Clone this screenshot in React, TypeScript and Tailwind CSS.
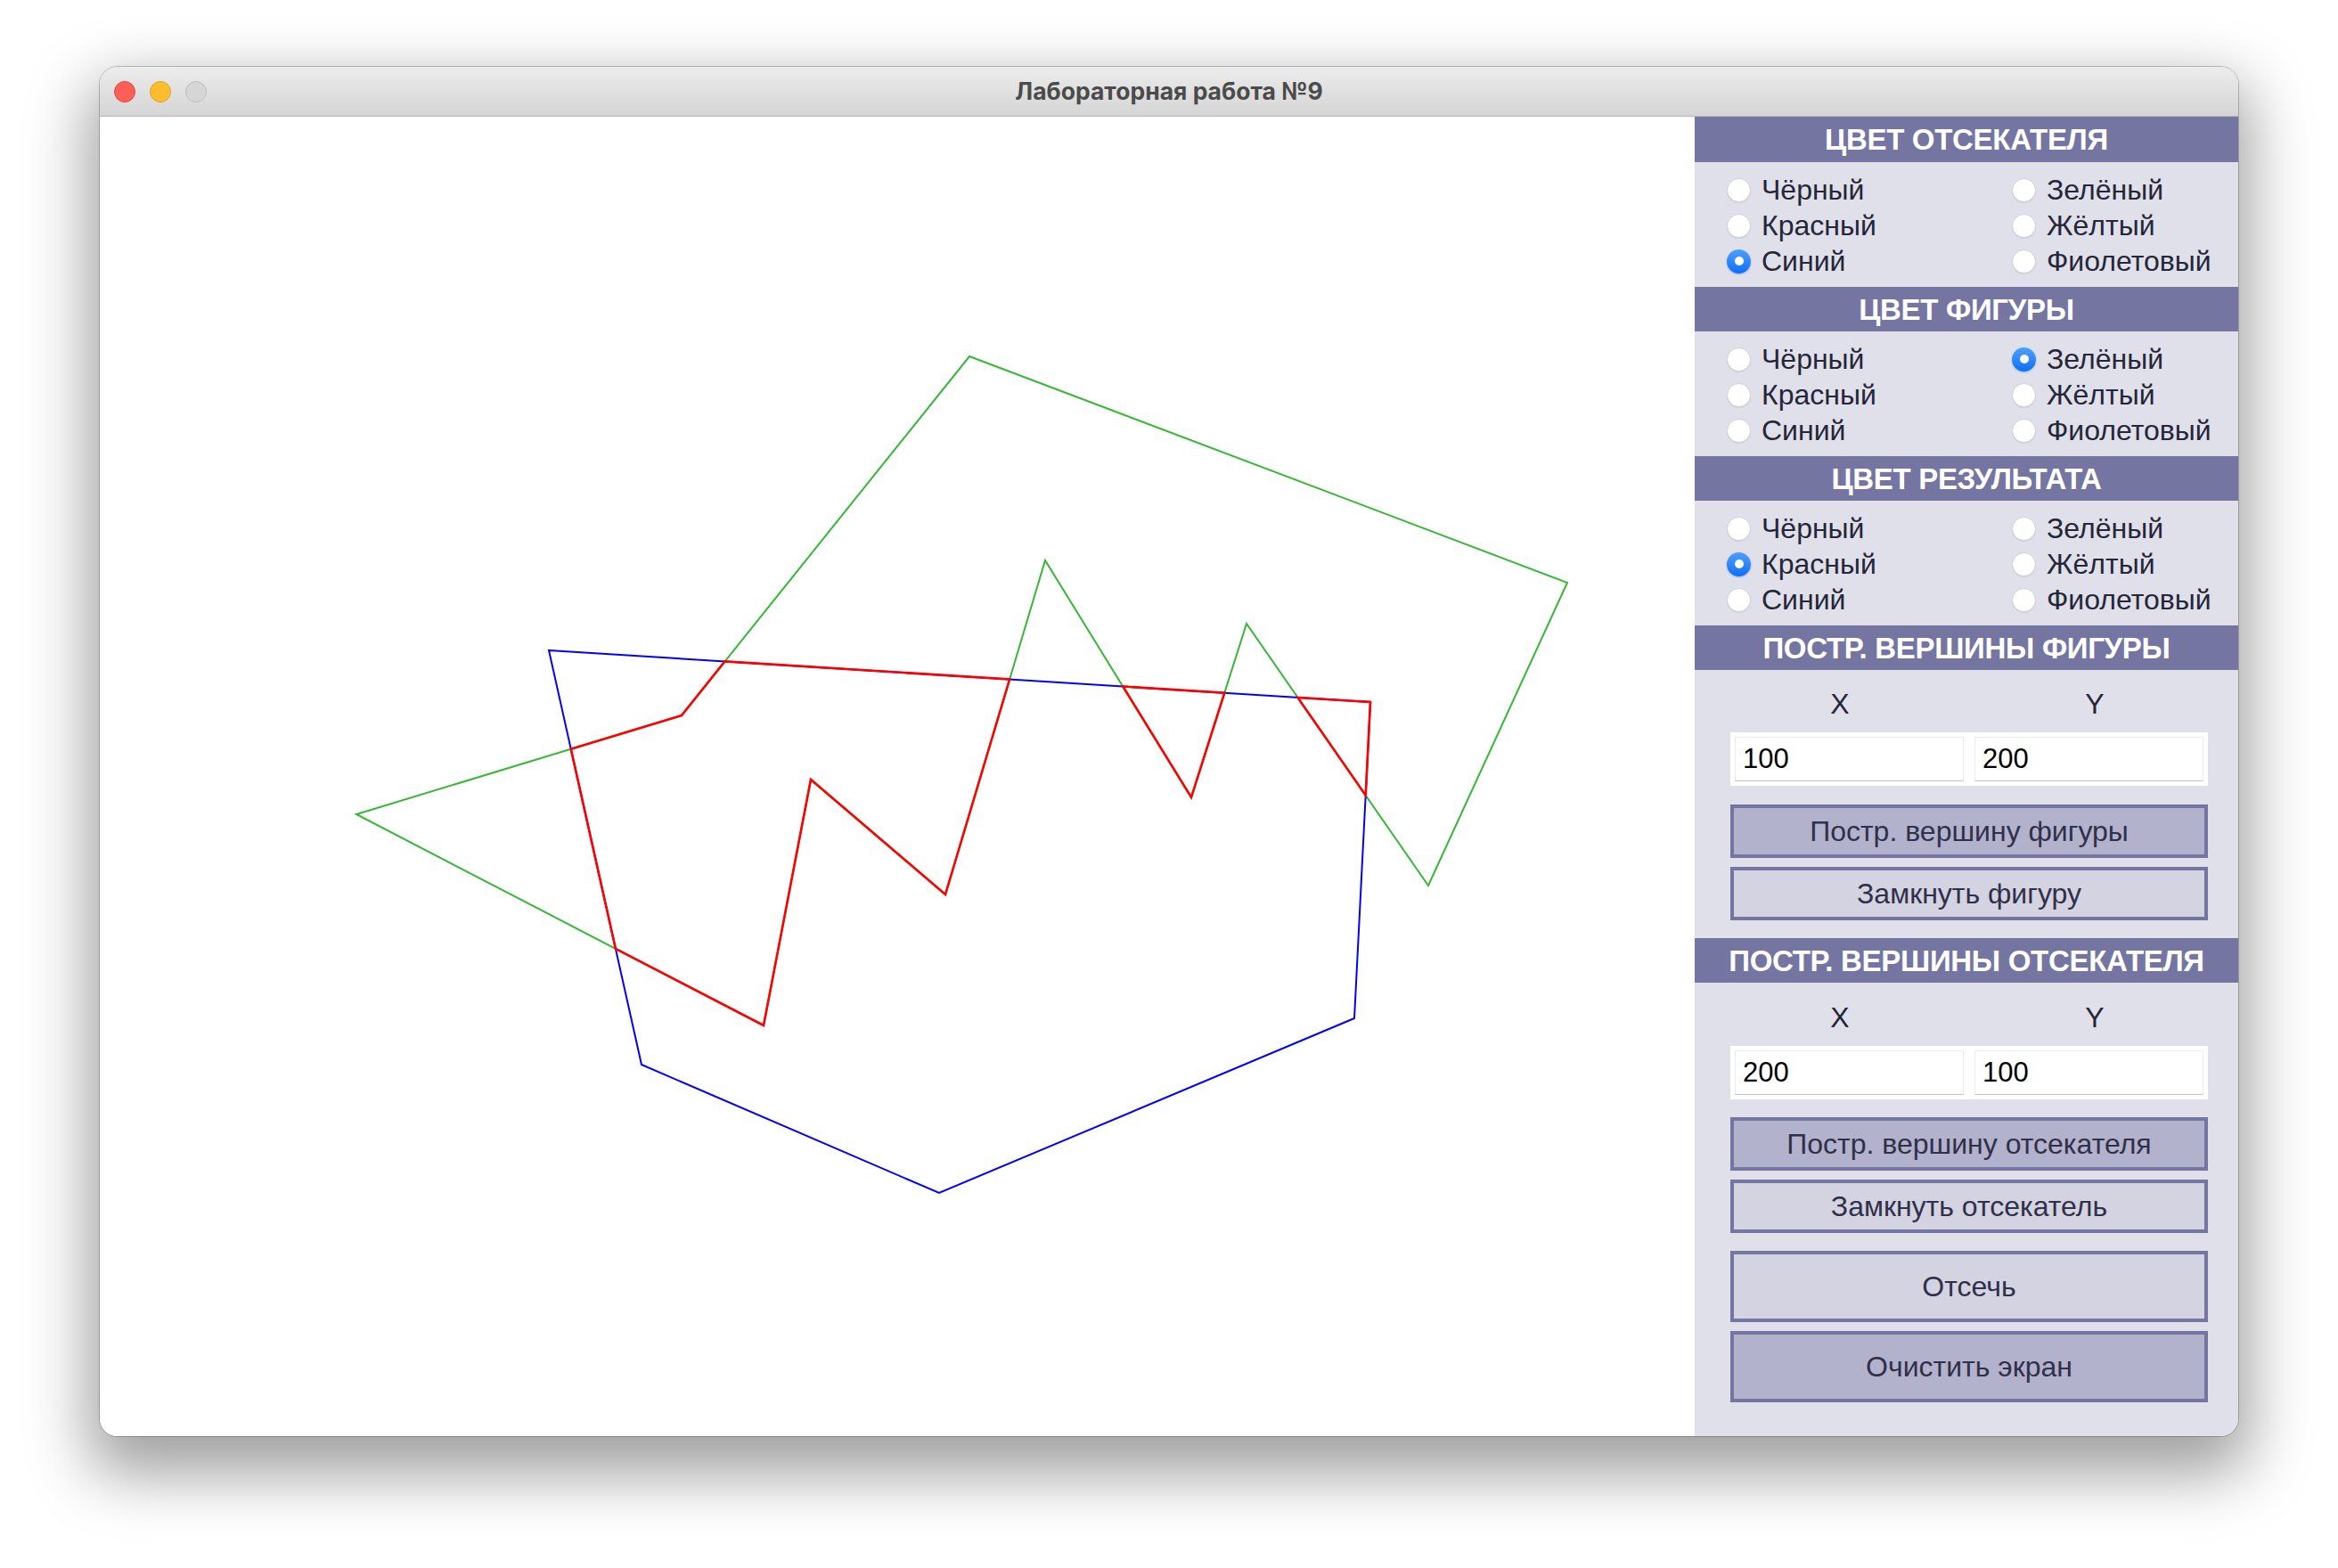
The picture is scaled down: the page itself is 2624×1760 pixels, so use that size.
import React from "react";

type P = [number, number];

function inter(p1: P, p2: P, p3: P, p4: P): P {
  const [x1, y1] = p1, [x2, y2] = p2, [x3, y3] = p3, [x4, y4] = p4;
  const d = (x1 - x2) * (y3 - y4) - (y1 - y2) * (x3 - x4);
  const t = ((x1 - x3) * (y3 - y4) - (y1 - y3) * (x3 - x4)) / d;
  return [x1 + t * (x2 - x1), y1 + t * (y2 - y1)];
}

const A: P = [288, 783], B: P = [653, 672], C: P = [976, 269], D: P = [1647, 523], E: P = [1491, 863];
const F: P = [1287, 569], G: P = [1225, 764], H: P = [1061, 498], I: P = [949, 873], J: P = [798, 744], K: P = [745, 1020];
const P1: P = [504, 599], P2: P = [1426, 657], P3: P = [1408, 1012], P4: P = [942, 1208], P5: P = [608, 1064];

const figure = [A, B, C, D, E, F, G, H, I, J, K];
const clipper = [P1, P2, P3, P4, P5];

const X1 = inter(A, B, P5, P1);
const X2 = inter(B, C, P1, P2);
const X3 = inter(H, I, P1, P2);
const X4 = inter(K, A, P5, P1);
const X5 = inter(H, G, P1, P2);
const X6 = inter(G, F, P1, P2);
const X7 = inter(F, E, P1, P2);
const X8 = inter(F, E, P2, P3);

const res1 = [X1, B, X2, X3, I, J, K, X4];
const res2 = [X5, G, X6];
const res3 = [X7, X8, P2];

const pts = (a: P[]) => a.map((p) => `${p[0].toFixed(1)},${p[1].toFixed(1)}`).join(" ");

function Radio({ checked, label }: { checked?: boolean; label: string }) {
  return (
    <div className="flex items-center gap-[12px] h-[40px]">
      {checked ? (
        <span className="w-[27px] h-[27px] rounded-full bg-linear-to-b from-[#4d9ffd] to-[#0a6df7] flex items-center justify-center shadow-[0_1px_2px_rgba(0,90,200,0.35)] shrink-0">
          <span className="w-[10px] h-[10px] rounded-full bg-white" />
        </span>
      ) : (
        <span className="w-[27px] h-[27px] rounded-full bg-white border border-[#d0d0d6] shadow-[0_1px_1px_rgba(0,0,0,0.08)] shrink-0" />
      )}
      <span className="text-[32px] leading-none text-[#262639]">{label}</span>
    </div>
  );
}

function Header({ children, h = "h-[50px]" }: { children: React.ReactNode; h?: string }) {
  return (
    <div className={`${h} bg-[#7575a1] flex items-center justify-center text-white font-bold text-[33px] leading-none tracking-[-0.3px] whitespace-nowrap`}>
      {children}
    </div>
  );
}

function RadioGroup({ sel }: { sel: number }) {
  const labels = ["Чёрный", "Красный", "Синий", "Зелёный", "Жёлтый", "Фиолетовый"];
  return (
    <div className="h-[140px] pt-[11px] pl-[36px] grid grid-cols-[320px_1fr] grid-rows-[40px_40px_40px] grid-flow-col">
      {labels.map((l, i) => (
        <Radio key={l} label={l} checked={i === sel} />
      ))}
    </div>
  );
}

function Btn({ children, dark, tall }: { children: React.ReactNode; dark?: boolean; tall?: boolean }) {
  return (
    <div
      className={`${tall ? "h-[80px]" : "h-[60px]"} ${dark ? "bg-[#b2b2cc]" : "bg-[#d3d3e1]"} border-[4px] border-[#7575a1] flex items-center justify-center text-[32px] leading-none text-[#30304a] whitespace-nowrap`}
    >
      {children}
    </div>
  );
}

function Coords({ x, y }: { x: string; y: string }) {
  const cls =
    "w-0 flex-1 min-w-0 h-[50px] bg-white border border-[#ececec] border-b-[#c2c2c2] pl-[8px] text-[31px] text-black outline-none font-['Liberation_Sans',sans-serif]";
  return (
    <>
      <div className="flex h-[30px] items-center text-[32px] leading-none text-[#262639]">
        <div className="w-[246px] text-center">X</div>
        <div className="w-[250px] ml-[38px] text-center">Y</div>
      </div>
      <div className="mt-[17px] h-[60px] bg-white p-[5px] flex gap-[12px]">
        <input readOnly value={x} size={1} className={cls} />
        <input readOnly value={y} size={1} className={cls} />
      </div>
    </>
  );
}

export default function App() {
  return (
    <div className="w-[2624px] h-[1760px] bg-white pt-[75px] pl-[112px] overflow-hidden font-['Liberation_Sans',Arial,sans-serif]">
      <div className="w-[2400px] h-[1537px] rounded-[20px] overflow-hidden flex flex-col shadow-[0_0_0_1px_rgba(0,0,0,0.22),0_30px_70px_12px_rgba(0,0,0,0.38)]">
        {/* title bar */}
        <div className="h-[56px] shrink-0 bg-linear-to-b from-[#ececec] to-[#d5d5d5] border-b border-[#b9b9b9] relative flex items-center pl-[16px] gap-[16px]">
          <span className="w-[24px] h-[24px] rounded-full bg-[#fe5f57] border border-[#e1443e]" />
          <span className="w-[24px] h-[24px] rounded-full bg-[#febc2e] border border-[#dea123]" />
          <span className="w-[24px] h-[24px] rounded-full bg-[#d6d6d6] border border-[#bdbdbd]" />
          <div className="absolute inset-0 flex items-center justify-center pointer-events-none">
            <span className="font-['Inter',sans-serif] font-bold text-[26.5px] text-[#4b4b4b]">Лабораторная работа №9</span>
          </div>
        </div>
        {/* body */}
        <div className="flex flex-1 min-h-0">
          <div className="w-[1790px] shrink-0 bg-white">
            <svg width="1790" height="1481" viewBox="0 0 1790 1481">
              <polygon points={pts(figure)} fill="none" stroke="#36b836" strokeWidth="2" />
              <polygon points={pts(clipper)} fill="none" stroke="#0000ff" strokeWidth="2" />
              <polygon points={pts(res1)} fill="none" stroke="#ff0000" strokeWidth="2.6" />
              <polygon points={pts(res2)} fill="none" stroke="#ff0000" strokeWidth="2.6" />
              <polygon points={pts(res3)} fill="none" stroke="#ff0000" strokeWidth="2.6" />
            </svg>
          </div>
          <div className="w-[610px] shrink-0 min-w-0 bg-[#e0e0ea] flex flex-col">
            <Header h="h-[51px]">ЦВЕТ ОТСЕКАТЕЛЯ</Header>
            <RadioGroup sel={2} />
            <Header>ЦВЕТ ФИГУРЫ</Header>
            <RadioGroup sel={3} />
            <Header>ЦВЕТ РЕЗУЛЬТАТА</Header>
            <RadioGroup sel={1} />
            <Header>ПОСТР. ВЕРШИНЫ ФИГУРЫ</Header>
            <div className="pl-[40px] pr-[34px] pt-[23px]">
              <Coords x="100" y="200" />
              <div className="mt-[21px]">
                <Btn dark>Постр. вершину фигуры</Btn>
              </div>
              <div className="mt-[10px]">
                <Btn>Замкнуть фигуру</Btn>
              </div>
            </div>
            <div className="mt-[20px]">
              <Header>ПОСТР. ВЕРШИНЫ ОТСЕКАТЕЛЯ</Header>
            </div>
            <div className="pl-[40px] pr-[34px] pt-[24px]">
              <Coords x="200" y="100" />
              <div className="mt-[20px]">
                <Btn dark>Постр. вершину отсекателя</Btn>
              </div>
              <div className="mt-[10px]">
                <Btn>Замкнуть отсекатель</Btn>
              </div>
              <div className="mt-[20px]">
                <Btn tall>Отсечь</Btn>
              </div>
              <div className="mt-[10px]">
                <Btn dark tall>Очистить экран</Btn>
              </div>
            </div>
          </div>
        </div>
      </div>
    </div>
  );
}
